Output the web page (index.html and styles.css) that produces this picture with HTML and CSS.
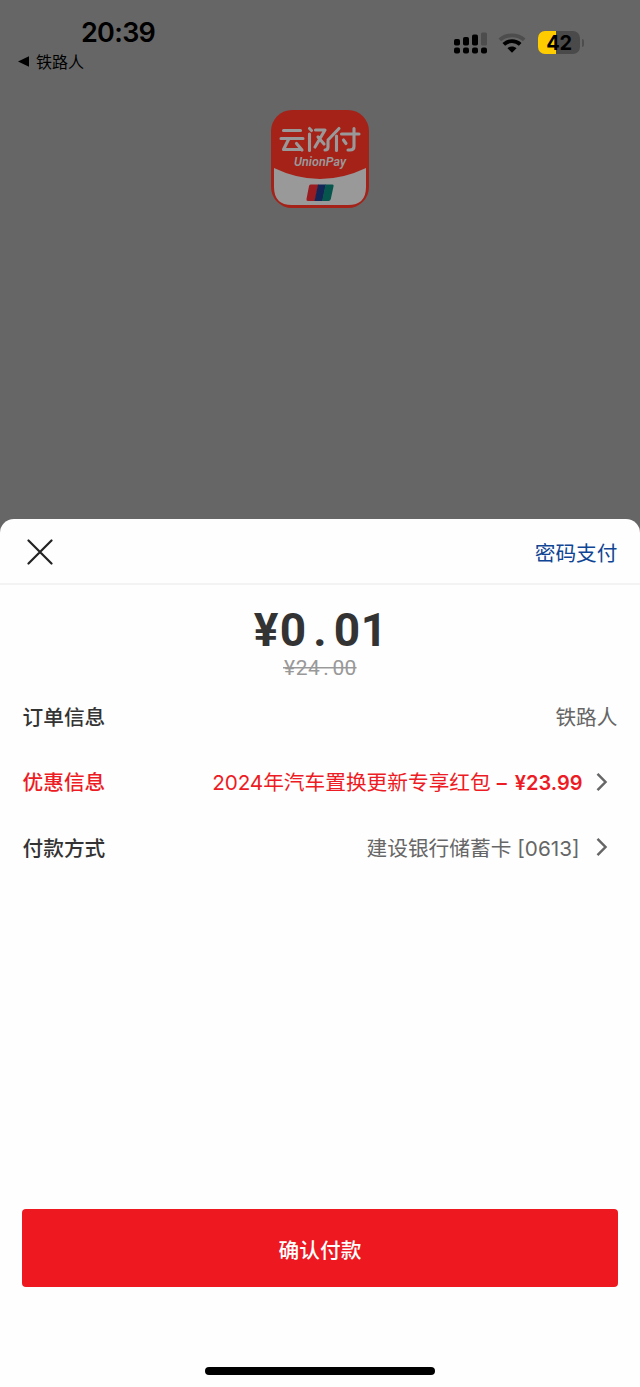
FILE: index.html
```html
<!DOCTYPE html>
<html lang="zh-CN">
<head>
  <meta charset="UTF-8">
  <meta name="viewport" content="width=device-width, initial-scale=1.0">
  <title>云闪付</title>
  <link rel="stylesheet" href="styles.css">
</head>
<body>
  <div class="screen">
    <header class="status-bar">
      <div class="status-left">
        <div class="time">20:39</div>
        <div class="back-app">
          <svg width="11" height="11" viewBox="0 0 11 11"><path d="M0 5.5L11 0.3V10.7Z"/></svg>
          <span>铁路人</span>
        </div>
      </div>
      <div class="status-right">
        <svg class="signal" width="34" height="24" viewBox="0 0 34 24">
          <rect x="0" y="7" width="6" height="6.5" rx="1.8"/>
          <rect x="9" y="5" width="6" height="8.5" rx="1.8"/>
          <rect x="18" y="2.5" width="6" height="11" rx="1.8"/>
          <rect class="dim" x="27" y="0.5" width="6" height="13" rx="1.5"/>
          <rect x="0" y="15.5" width="6" height="6" rx="2"/>
          <rect x="9" y="15.5" width="6" height="6" rx="2"/>
          <rect x="18" y="15.5" width="6" height="6" rx="2"/>
          <rect x="27" y="15.5" width="6" height="6" rx="2"/>
        </svg>
        <svg class="wifi" width="28" height="22" viewBox="0 0 28 22">
          <path class="dim-line" d="M1.8 6.8C8.5 0.8 19.5 0.8 26.2 6.8"/>
          <path class="line" d="M5.8 11.3C10.4 7 17.6 7 22.2 11.3"/>
          <path d="M9.5 15.2C12 13 16 13 18.5 15.2L14 19.7Z"/>
        </svg>
        <div class="battery">
          <div class="battery-body">42</div>
          <div class="battery-cap"></div>
        </div>
      </div>
    </header>

    <div class="logo">
      <svg width="98" height="98" viewBox="0 0 98 98">
        <rect width="98" height="98" rx="21" fill="#a52219"/>
        <path d="M3 58Q49 80 95 58V77Q95 95 77 95H21Q3 95 3 77Z" fill="#999"/>
        <g fill="none" stroke="#999" stroke-width="3.1" stroke-linecap="round" stroke-linejoin="round">
          <path d="M12.5 20.5H29.5M10 28.5H32M18 28.5L12.5 39.5H30.5M25.5 33.5L31 40"/>
          <path d="M38.5 24V40.5M38.5 18.5L40.5 20.5M44.5 20H54L44 37M47 27L53 34M57 31V37Q57 40 54 40M57 30L68 18.5"/>
          <path d="M65.5 26V40.5M70.5 24H88M83 18.5V36.5Q83 40 79 40H77M72.5 30L75 33.5"/>
        </g>
        <text x="23" y="56" class="logo-text" textLength="52" lengthAdjust="spacingAndGlyphs">UnionPay</text>
        <path d="M39.5 74.5H47.5L44 91H37Q35 91 35.5 89L38 76Q38.3 74.5 39.5 74.5Z" fill="#9b1c20"/>
        <path d="M47 74.5H55L51.5 91H43.5Z" fill="#122657"/>
        <path d="M54.5 74.5H61.5Q63 74.5 62.6 76L59.8 89Q59.4 91 57.5 91H51Z" fill="#07564d"/>
      </svg>
    </div>

    <main class="sheet">
      <div class="sheet-header">
        <svg width="26" height="26" viewBox="0 0 26 26"><path d="M1.5 1.5L24.5 24.5M24.5 1.5L1.5 24.5"/></svg>
        <a class="password-pay">密码支付</a>
      </div>

      <div class="amount"><span>¥</span><span>0</span><span>.</span><span>0</span><span>1</span></div>
      <div class="original"><span>¥</span><span>2</span><span>4</span><span>.</span><span>0</span><span>0</span></div>

      <div class="rows">
        <div class="row">
          <span class="label">订单信息</span>
          <span class="value">铁路人</span>
        </div>
        <div class="row discount">
          <span class="label">优惠信息</span>
          <span class="value"><span class="year">2024</span>年汽车置换更新专享红包<b class="dash">–</b><b>¥23.99</b></span>
          <svg class="chevron" width="12" height="20" viewBox="0 0 12 20"><path d="M1.5 1.8L9.5 10L1.5 18.2"/></svg>
        </div>
        <div class="row">
          <span class="label">付款方式</span>
          <span class="value card">建设银行储蓄卡<span class="card-no">[0613]</span></span>
          <svg class="chevron" width="12" height="20" viewBox="0 0 12 20"><path d="M1.5 1.8L9.5 10L1.5 18.2"/></svg>
        </div>
      </div>

      <button class="confirm">确认付款</button>
      <div class="home-indicator"></div>
    </main>
  </div>
</body>
</html>
```

FILE: styles.css
```css
* {
  box-sizing: border-box;
}

body {
  margin: 0;
  font-family: Inter, "Noto Sans CJK SC", sans-serif;
  background-color: #666;
  color: #333;
}

.screen {
  width: 640px;
  height: 1387px;
  display: flex;
  flex-direction: column;
  overflow: hidden;
}

.status-bar {
  height: 110px;
  display: flex;
  justify-content: space-between;
  padding: 17px 56px 0 18px;
  color: #000;
}

.time {
  margin-left: 63px;
  font-size: 27px;
  line-height: 32px;
  font-weight: 600;
  letter-spacing: -0.7px;
}

.back-app {
  display: flex;
  align-items: center;
  gap: 7px;
  height: 24px;
  font-size: 16px;
}

.status-right {
  display: flex;
  align-items: flex-start;
  padding-top: 14px;
}

.signal {
  margin-top: 1px;
}

.signal .dim {
  fill: #4d4d4d;
}

.wifi {
  margin: 2px 12px 0 10px;
}

.wifi .line,
.wifi .dim-line {
  fill: none;
  stroke: #000;
  stroke-width: 3.8;
}

.wifi .dim-line {
  stroke: #4d4d4d;
}

.battery {
  display: flex;
  align-items: center;
  gap: 2px;
}

.battery-body {
  width: 42px;
  height: 23px;
  border-radius: 7px;
  background: linear-gradient(to right, #fc0 18px, #4a4a4a 18px);
  font-size: 20px;
  line-height: 24px;
  font-weight: 700;
  text-align: center;
  letter-spacing: -0.3px;
}

.battery-cap {
  width: 2px;
  height: 8px;
  border-radius: 0 3px 3px 0;
  background-color: #4d4d4d;
}

.logo {
  height: 409px;
  padding-left: 271px;
}

.logo svg {
  display: block;
}

.logo-text {
  font-family: Roboto, sans-serif;
  font-size: 12px;
  font-weight: 600;
  font-style: italic;
  fill: #999;
}

.sheet {
  flex: 1;
  display: flex;
  flex-direction: column;
  background-color: #fefefe;
  border-radius: 14px 14px 0 0;
}

.sheet-header {
  height: 66px;
  display: flex;
  align-items: center;
  justify-content: space-between;
  padding: 1px 22.5px 0 27px;
  border-bottom: 2px solid #f3f3f3;
}

.sheet-header path {
  stroke: #222;
  stroke-width: 2.2;
  stroke-linecap: round;
}

.password-pay {
  font-size: 20.7px;
  color: #0f4594;
}

.amount {
  display: flex;
  justify-content: center;
  margin-top: 20px;
  font-family: Roboto, sans-serif;
  font-size: 46px;
  line-height: 50px;
  font-weight: 700;
}

.amount span {
  width: 27px;
  text-align: center;
}

.original {
  align-self: center;
  display: flex;
  font-family: Roboto, sans-serif;
  font-size: 21px;
  line-height: 26px;
  color: #999;
  background: linear-gradient(#999, #999) center 12px / 100% 1.5px no-repeat;
}

.original span {
  width: 12.2px;
  text-align: center;
}

.rows {
  padding: 2px 22.5px 0 22.5px;
}

.row {
  height: 65.5px;
  display: flex;
  align-items: center;
  font-size: 20.7px;
}

.label {
  flex: 1;
  font-weight: 500;
}

.value {
  color: #666;
}

.discount .label,
.discount .value {
  color: #ed1b24;
}

.year {
  letter-spacing: -0.1px;
}

.value b {
  font-weight: 600;
  font-size: 20px;
}

.value .dash {
  margin: 0 8px 0 6px;
}

.card {
  margin-right: 3px;
}

.card-no {
  margin-left: 6px;
}

.chevron {
  margin: 1px 10px 0 13px;
}

.chevron path {
  fill: none;
  stroke: #666;
  stroke-width: 2.5;
}

.confirm {
  height: 78px;
  margin: auto 22px 0;
  padding-top: 3px;
  border: none;
  border-radius: 4px;
  background-color: #ed1820;
  color: #fff;
  font-family: inherit;
  font-size: 20.7px;
  font-weight: 500;
}

.home-indicator {
  width: 230px;
  height: 8px;
  margin: 80px auto 12px;
  border-radius: 4px;
  background-color: #000;
}
```
